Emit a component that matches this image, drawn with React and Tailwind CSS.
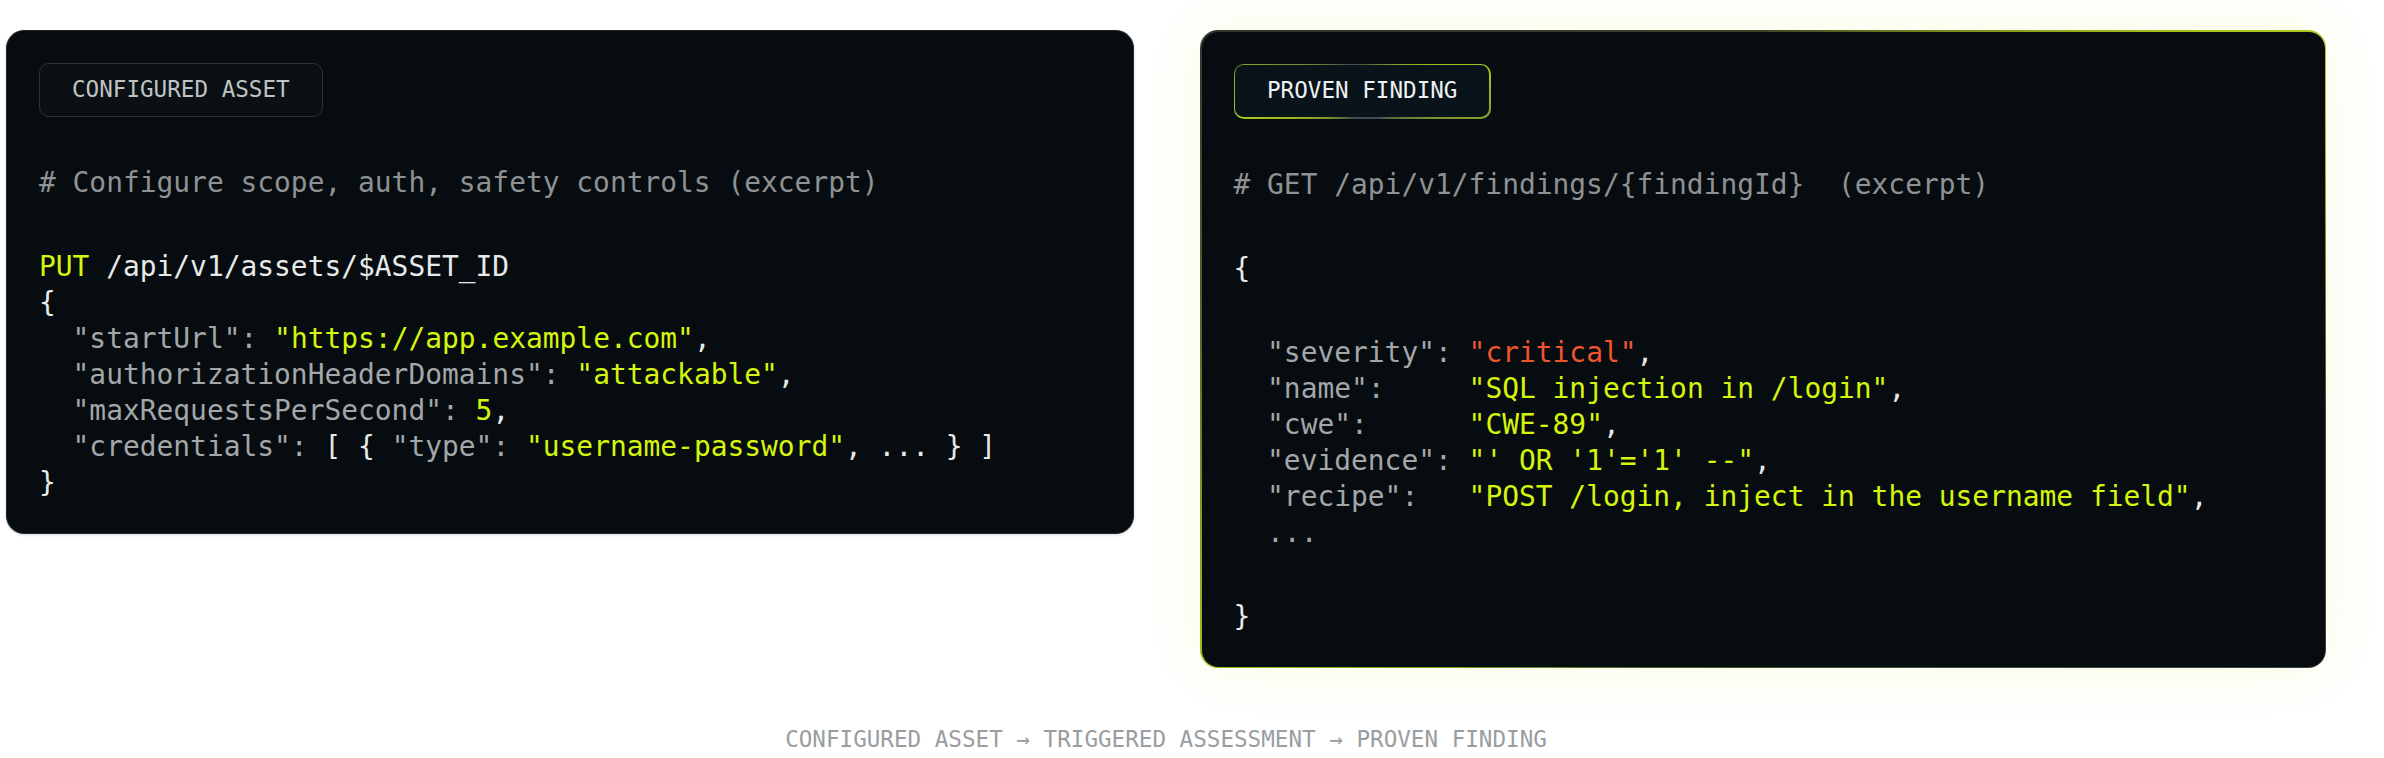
const mono = { fontFamily: '"DejaVu Sans Mono", "Liberation Mono", monospace' }

const K = ({ children }) => <span className="text-[#a3a7a9]">{children}</span>
const V = ({ children }) => <span className="text-[#d6f50c]">{children}</span>
const P = ({ children }) => <span className="text-[#e8eaea]">{children}</span>

const Line = ({ children }) => (
  <div className="h-[36px] leading-[36px] whitespace-pre">{children}</div>
)

const App = () => {
  return (
    <div className="min-h-screen bg-white" style={mono}>
      <div className="w-[2326px] pt-[30px] pl-[6px]">
        <div className="flex items-start gap-[66px]">
          {/* Configured asset */}
          <div className="w-[1128px] rounded-[18px] border border-[#22292d] bg-[#060c0f] p-8 shadow-[0_1px_3px_rgba(0,0,0,0.15)]">
            <div className="flex flex-col gap-12">
              <div>
                <span className="inline-flex h-[54px] items-center rounded-[10px] border border-[#2c3337] bg-[#0a1013] px-8 text-[22.6px] text-[#bfc3c4]">
                  CONFIGURED ASSET
                </span>
              </div>
              <div className="text-[27.9px] text-[#8e9294]">
                <Line># Configure scope, auth, safety controls (excerpt)</Line>
              </div>
              <div className="text-[27.9px]">
                <Line><V>PUT</V><P> /api/v1/assets/$ASSET_ID</P></Line>
                <Line><P>{'{'}</P></Line>
                <Line><K>{'  "startUrl": '}</K><V>"https://app.example.com"</V><P>,</P></Line>
                <Line><K>{'  "authorizationHeaderDomains": '}</K><V>"attackable"</V><P>,</P></Line>
                <Line><K>{'  "maxRequestsPerSecond": '}</K><V>5</V><P>,</P></Line>
                <Line><K>{'  "credentials": '}</K><P>{'[ { '}</P><K>{'"type": '}</K><V>"username-password"</V><P>{', ... } ]'}</P></Line>
                <Line><P>{'}'}</P></Line>
              </div>
            </div>
          </div>

          {/* Proven finding */}
          <div className="w-[1126px] rounded-[18px] p-[1.5px] bg-[conic-gradient(from_0deg,#3a4525,#a8c81a_55deg,#a8c81a_65deg,#4a5530_95deg,#3a4044_120deg,#4d5a2a_200deg,#9cc01a_241deg,#55652a_272deg,#2f3630_300deg,#3a4525)] shadow-[0_0_60px_rgba(200,235,40,0.14)]">
            <div className="rounded-[16.5px] bg-[#060c0f] p-8">
              <div className="flex flex-col gap-12">
                <div>
                  <span className="inline-flex rounded-[10px] p-[1.5px] bg-[conic-gradient(from_0deg,#4a5540,#a8c81a_78deg,#454c4f_150deg,#454c4f_200deg,#a8c81a_258deg,#454c4f_330deg,#4a5540)]">
                    <span className="inline-flex h-[52px] items-center rounded-[8.5px] bg-[#08131a] px-8 text-[22.6px] text-[#eef2f4]">
                      PROVEN FINDING
                    </span>
                  </span>
                </div>
                <div className="text-[27.9px] text-[#8e9294]">
                  <Line>{'# GET /api/v1/findings/{findingId}  (excerpt)'}</Line>
                </div>
                <div className="text-[27.9px]">
                  <Line><P>{'{'}</P></Line>
                </div>
                <div className="text-[27.9px]">
                  <Line><K>{'  "severity": '}</K><span className="text-[#f0552f]">"critical"</span><P>,</P></Line>
                  <Line><K>{'  "name":     '}</K><V>"SQL injection in /login"</V><P>,</P></Line>
                  <Line><K>{'  "cwe":      '}</K><V>"CWE-89"</V><P>,</P></Line>
                  <Line><K>{'  "evidence": '}</K><V>"' OR '1'='1' --"</V><P>,</P></Line>
                  <Line><K>{'  "recipe":   '}</K><V>"POST /login, inject in the username field"</V><P>,</P></Line>
                  <Line><K>{'  ...'}</K></Line>
                </div>
                <div className="text-[27.9px]">
                  <Line><P>{'}'}</P></Line>
                </div>
              </div>
            </div>
          </div>
        </div>

        <div className="mt-[57px] text-center text-[22.6px] leading-[28px] text-[#9a9d9f]">
          CONFIGURED ASSET → TRIGGERED ASSESSMENT → PROVEN FINDING
        </div>
      </div>
    </div>
  )
}

export default App
